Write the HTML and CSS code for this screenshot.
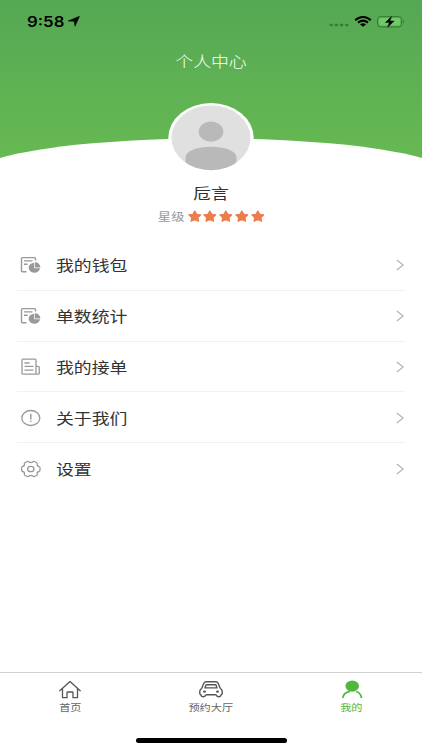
FILE: index.html
```html
<!DOCTYPE html>
<html lang="zh-CN">
<head>
<meta charset="utf-8">
<title>个人中心</title>
<link rel="stylesheet" href="styles.css">
</head>
<body>
<svg width="0" height="0" class="defs">
  <symbol id="report" viewBox="0 0 22 18"><path d="M6.5 15.8H2.5Q1.5 15.8 1.5 14.8V2.6Q1.5 1.6 2.5 1.6H14.5Q15.5 1.6 15.5 2.6V4.6M4 4.9h8.5M4 8.2h3.6" fill="none" stroke="#999" stroke-width="1.4"/><path d="M14.1 6.8A5.7 5 0 1 0 20 12.2H14.1Z" fill="#999"/><path d="M14.8 6.2A5.4 5.2 0 0 1 20.4 11.4H14.8Z" fill="#999"/></symbol>
  <symbol id="arrow" viewBox="0 0 8 12"><path d="M.8 1 7.2 6 .8 11" fill="none" stroke="#b0b0b0" stroke-width="1.1"/></symbol>
  <symbol id="star" viewBox="0 0 13 12"><path d="M6.5 1 8.3 4.1 12.2 4.7 9.5 7.2 10.1 10.8 6.5 9.4 2.9 10.8 3.5 7.2 .8 4.7 4.7 4.1Z" fill="#ed7d4e" stroke="#ed7d4e" stroke-width="1.2" stroke-linejoin="round"/></symbol>
</svg>
<div class="app">
  <header class="header">
    <svg class="curve" viewBox="0 0 422 22"><path d="M0 22V20A245 40 0 0 1 422 20V22Z" fill="#fff"/></svg>
    <div class="status">
      <span class="time">9:58</span>
      <svg class="loc" width="12" height="11" viewBox="0 0 12 11"><path d="M0 5.1 11.5.2 7 10.3 6.2 5.3Z" stroke="#000" stroke-width=".5" stroke-linejoin="round"/></svg>
      <svg class="signal" width="20" height="4" viewBox="0 0 20 4"><g fill="#397c38"><rect x=".5" y=".7" width="3.4" height="2.6" rx="1"/><rect x="5.7" y=".7" width="3.4" height="2.6" rx="1"/><rect x="10.9" y=".7" width="3.4" height="2.6" rx="1"/><rect x="16.1" y=".7" width="3.4" height="2.6" rx="1"/></g></svg>
      <svg class="wifi" width="18" height="11" viewBox="0 0 18 11"><path d="M1.2 4.1Q9-2.2 16.8 4.1M4 6.6Q9 2.6 14 6.6" fill="none" stroke="#000" stroke-width="2"/><path d="M6 8.4Q9 6.2 12 8.4L9 10.8Z"/></svg>
      <svg class="battery" width="28" height="12" viewBox="0 0 28 12"><rect x=".6" y=".7" width="24" height="10.2" rx="2.6" fill="#5dae58" stroke="#347634"/><rect x="2.2" y="2.1" width="20.8" height="7.4" rx="1.4" fill="#6dca67"/><path d="M26.2 4.1Q28.4 5.8 26.2 7.5Z" fill="#347634"/><path d="M14.5.5 8.3 6.5h4L10.6 11.2 17.2 5.1h-4.1Z" stroke="#000" stroke-width=".4"/></svg>
    </div>
    <h1 class="title"><span class="wide">个人中心</span></h1>
  </header>
  <section class="profile">
    <svg class="avatar" width="86" height="70" viewBox="0 0 86 70"><defs><clipPath id="face"><ellipse cx="43" cy="34.8" rx="39.5" ry="32.4"/></clipPath></defs><ellipse cx="43" cy="34.8" rx="42.7" ry="34.8" fill="#fff"/><g clip-path="url(#face)"><path d="M0 0H86V70H0Z" fill="#e0e0e0"/><ellipse cx="43" cy="28.6" rx="12.3" ry="10.2" fill="#b9b9b9"/><path d="M17.5 70V54.5C17.5 48 29 43.7 43 43.7S68.5 48 68.5 54.5V70Z" fill="#b9b9b9"/></g></svg>
    <div class="name"><span class="wide">卮言</span></div>
    <div class="rating"><span class="level"><span class="wide">星级</span></span><span class="stars"><svg><use href="#star"/></svg><svg><use href="#star"/></svg><svg><use href="#star"/></svg><svg><use href="#star"/></svg><svg><use href="#star"/></svg></span></div>
  </section>
  <main class="menu">
    <div class="row"><svg class="icon"><use href="#report"/></svg><span class="label wide">我的钱包</span><svg class="arrow"><use href="#arrow"/></svg></div>
    <div class="row"><svg class="icon"><use href="#report"/></svg><span class="label wide">单数统计</span><svg class="arrow"><use href="#arrow"/></svg></div>
    <div class="row"><svg class="icon" viewBox="0 0 22 18"><path d="M16 16.1H2.9Q2 16.1 2 15.2V2.1Q2 1.2 2.9 1.2H15.1Q16 1.2 16 2.1V16.1H18.3Q19.3 16.1 19.3 15.1V9.4Q19.3 8.4 18.3 8.4H16M4.5 5h5M4.5 8.3h9M4.5 12.2h9" fill="none" stroke="#999" stroke-width="1.3"/></svg><span class="label wide">我的接单</span><svg class="arrow"><use href="#arrow"/></svg></div>
    <div class="row"><svg class="icon" viewBox="0 0 22 18"><ellipse cx="10.8" cy="9" rx="9" ry="7.5" fill="none" stroke="#999" stroke-width="1.3"/><path d="M10.8 4.8v5.8M10.8 11.7v1.4" stroke="#999" stroke-width="1.4"/></svg><span class="label wide">关于我们</span><svg class="arrow"><use href="#arrow"/></svg></div>
    <div class="row"><svg class="icon" viewBox="0 0 22 18"><path d="M7.2 1.5Q8.2 1.2 8.8 1.9Q10.8 3.3 12.8 1.9Q13.4 1.2 14.4 1.5L16.8 2.7Q17.5 3.2 17.2 4.1Q16.8 6 19 6.5Q20 6.8 20 7.7V10.3Q20 11.2 19 11.5Q16.8 12 17.2 13.9Q17.5 14.8 16.8 15.3L14.4 16.5Q13.4 16.8 12.8 16.1Q10.8 14.7 8.8 16.1Q8.2 16.8 7.2 16.5L4.8 15.3Q4.1 14.8 4.4 13.9Q4.8 12 2.6 11.5Q1.6 11.2 1.6 10.3V7.7Q1.6 6.8 2.6 6.5Q4.8 6 4.4 4.1Q4.1 3.2 4.8 2.7Z" fill="none" stroke="#999" stroke-width="1.3"/><ellipse cx="10.8" cy="9" rx="3.2" ry="2.7" fill="none" stroke="#999" stroke-width="1.3"/></svg><span class="label wide">设置</span><svg class="arrow"><use href="#arrow"/></svg></div>
  </main>
  <footer class="footer">
    <nav class="tabs">
      <div class="tab"><svg width="24" height="20" viewBox="0 0 24 20"><path d="M1.8 10.7 12 1.4 22.2 10.7M4.5 8.6V17.7H9V12.8Q9 12 9.8 12H14.2Q15 12 15 12.8V17.7H19.5V8.6" fill="none" stroke="#555" stroke-width="1.3" stroke-linejoin="round" stroke-linecap="round"/></svg><span class="wide">首页</span></div>
      <div class="tab"><svg width="26" height="20" viewBox="0 0 26 20"><path d="M3.8 8.3 5.7 3.6Q6.5 1.7 8.8 1.7H17.2Q19.5 1.7 20.3 3.6L22.2 8.3Q24.2 9.2 24.2 11.2V13.4Q24.2 14.4 23.2 14.6Q22.8 16.7 20.6 16.7Q18.7 16.7 17.9 14.8H8.1Q7.3 16.7 5.4 16.7Q3.2 16.7 2.8 14.6Q1.8 14.4 1.8 13.4V11.2Q1.8 9.2 3.8 8.3ZM7 7.9 8 5Q8.1 4.7 8.6 4.7H17.4Q17.9 4.7 18 5L19 7.9Z" fill="none" stroke="#555" stroke-width="1.4" stroke-linejoin="round"/><ellipse cx="6.5" cy="11.6" rx="1.5" ry="1.2" fill="#555"/><ellipse cx="19.5" cy="11.6" rx="1.5" ry="1.2" fill="#555"/></svg><span class="wide">预约大厅</span></div>
      <div class="tab active"><svg width="24" height="20" viewBox="0 0 24 20"><ellipse cx="12.2" cy="6.1" rx="6.8" ry="5.6" fill="#50b63e"/><path d="M2.8 18Q3.4 12.4 10 11.3M16.2 11.5Q20.8 13 21.6 18" fill="none" stroke="#50b63e" stroke-width="1.8"/></svg><span class="wide">我的</span></div>
    </nav>
    <div class="home-bar"></div>
  </footer>
</div>
</body>
</html>
```
FILE: styles.css
```css
* { box-sizing: border-box; }
body {
  margin: 0;
  background: #fff;
  font-family: "Noto Sans CJK SC", sans-serif;
}
svg { display: block; flex: none; }
.defs { position: absolute; }
.app {
  width: 422px;
  height: 750px;
  display: flex;
  flex-direction: column;
  overflow: hidden;
}
.wide { display: inline-block; transform: scaleX(1.19); }
.header {
  position: relative;
  height: 160px;
  flex: none;
  background: linear-gradient(#55a854, #67b952);
}
.curve { position: absolute; left: 0; bottom: 0; width: 422px; height: 22px; }
.status {
  height: 42px;
  display: flex;
  align-items: center;
  padding: 1px 17px 0 27px;
}
.time {
  width: 38px;
  font: 600 14px/20px Inter, sans-serif;
  transform: scaleX(1.2);
  transform-origin: left;
}
.loc { margin-left: 3px; }
.signal { margin: 7px 5px 0 auto; }
.wifi { margin-right: 5px; }
.title {
  margin: 8px 0 0;
  text-align: center;
  font-size: 15px;
  line-height: 22px;
  font-weight: 300;
  color: #fff;
}
.profile {
  position: relative;
  height: 80px;
  flex: none;
  display: flex;
  flex-direction: column;
  align-items: center;
}
.avatar { margin-top: -57.5px; }
.name { margin-top: 9.5px; font-size: 15px; line-height: 22px; color: #333; }
.rating {
  display: flex;
  align-items: center;
  margin-top: 2px;
  font-size: 11.2px;
  line-height: 20px;
  color: #999;
}
.level { width: 30px; padding-left: 2px; }
.stars { display: flex; gap: 2.2px; }
.stars svg { width: 13.6px; height: 12.5px; }
.menu { padding: 0 17px; flex: 1; }
.row {
  height: 50.8px;
  display: flex;
  align-items: center;
  padding: 1px 0 0 3px;
  border-bottom: 1px solid #f1f1f1;
}
.row:last-child { border-bottom: 0; }
.icon { width: 22px; height: 18px; }
.label {
  margin-left: 13.5px;
  font-size: 15px;
  line-height: 24px;
  color: #333;
  transform-origin: left;
}
.arrow { width: 8px; height: 12px; margin: 0 1px 0 auto; }
.footer { height: 78px; flex: none; border-top: 1px solid #d2d2d2; }
.tabs { display: flex; height: 65px; padding-top: 7px; }
.tab {
  flex: 1;
  display: flex;
  flex-direction: column;
  align-items: center;
  font-size: 9.4px;
  line-height: 14px;
  color: #666;
}
.active { color: #50b63e; }
.home-bar {
  width: 151px;
  height: 5px;
  margin: 0 auto;
  border-radius: 3px;
  background: #000;
}
```
